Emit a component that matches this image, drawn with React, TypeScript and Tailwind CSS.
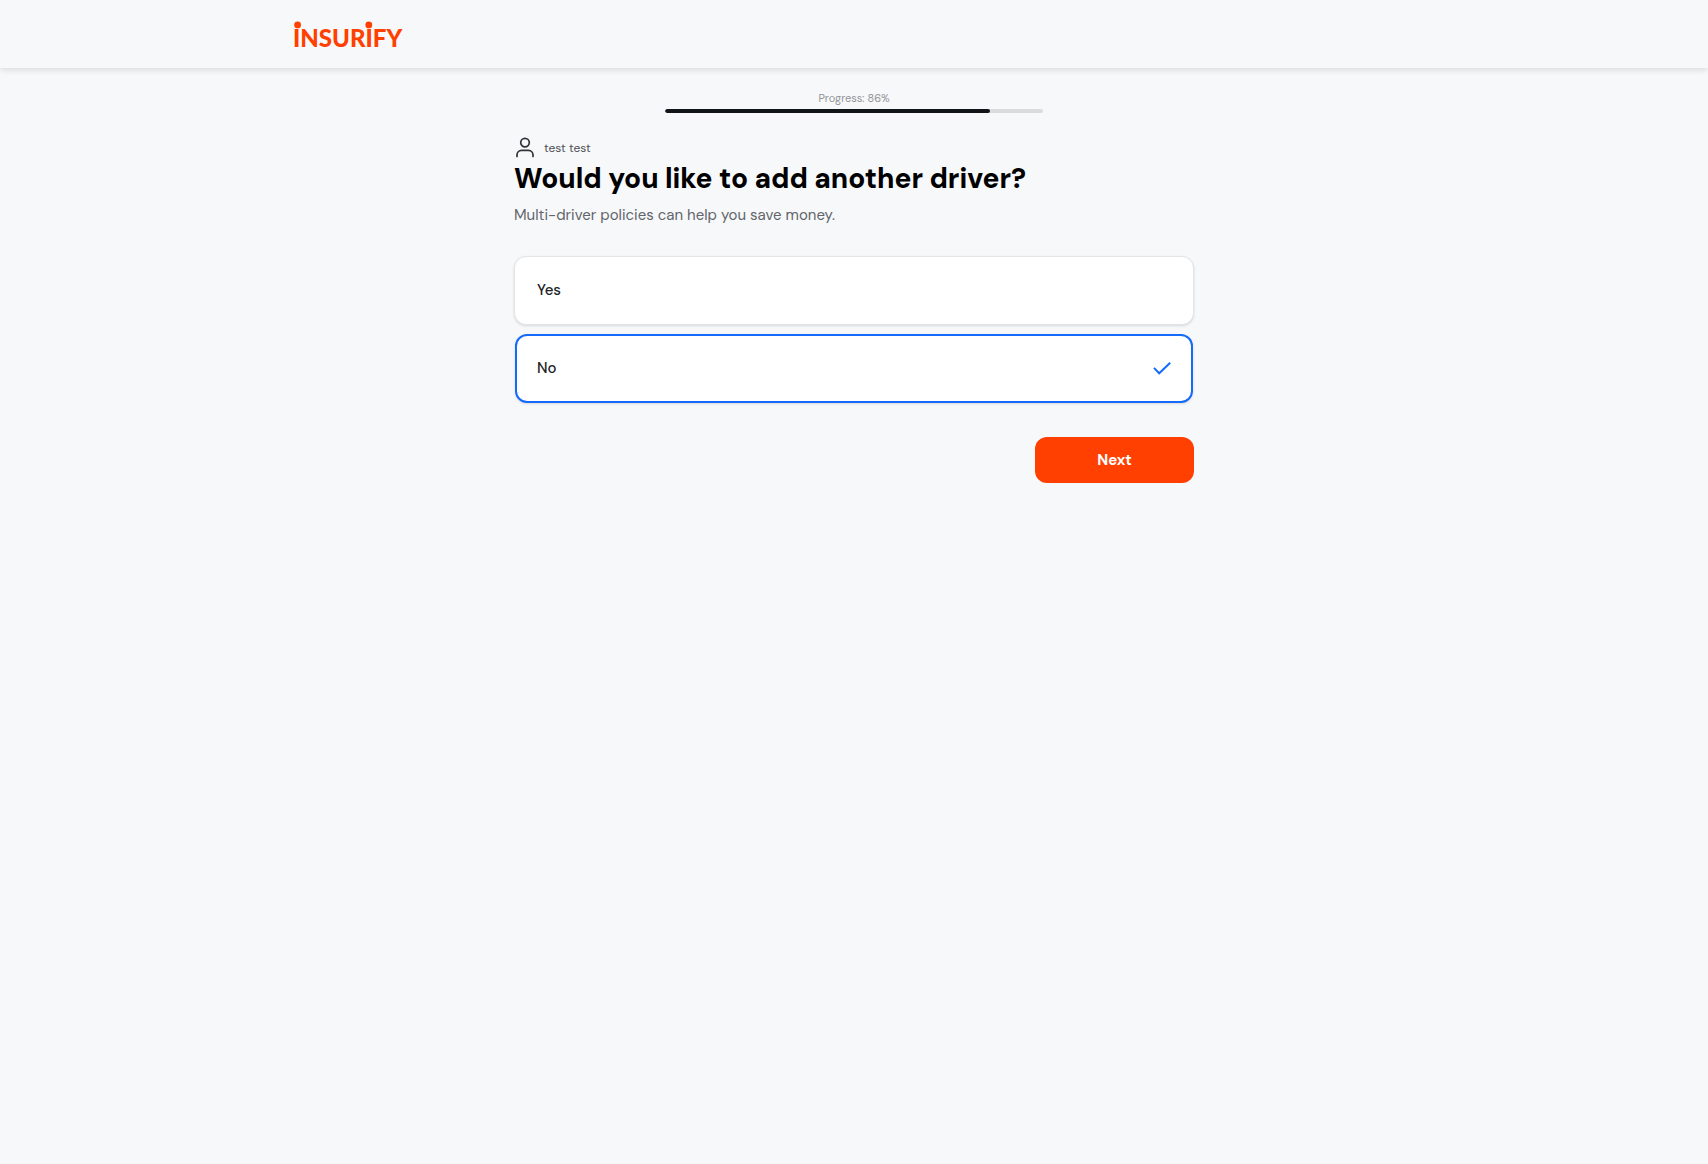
import { useState } from "react";

function Logo() {
  return (
    <svg viewBox="0 0 110 36" className="h-9 w-[110px] overflow-visible" role="img" aria-label="Insurify">
      <g fill="#ff4000">
        <circle cx="3.6" cy="4.9" r="3.4" />
        <circle cx="74.8" cy="4.9" r="3.4" />
        <text y="27" x="-1" fontFamily="Lato, sans-serif" fontWeight="900" fontSize="24">
          INSURIFY
        </text>
      </g>
    </svg>
  );
}

function UserIcon() {
  return (
    <svg viewBox="0 0 22 22" className="size-[22px]" fill="none" stroke="#303236" strokeWidth="1.7" strokeLinecap="round" aria-hidden="true">
      <circle cx="11" cy="5.6" r="4.3" />
      <path d="M3 19.4V18C3 15.4 4.9 13.4 7.5 13.4H14.5C17.1 13.4 19 15.4 19 18V19.4" />
    </svg>
  );
}

function CheckIcon() {
  return (
    <svg viewBox="0 0 18 14" className="h-3.5 w-[18px]" fill="none" stroke="#146bfb" strokeWidth="2" aria-hidden="true">
      <path d="M1 5.9L6.2 11.3L17.2 0.7" />
    </svg>
  );
}

const options = ["Yes", "No"];

export default function App() {
  const [selected, setSelected] = useState("No");
  const progress = 86;

  return (
    <div className="min-h-screen bg-[#f6f8fa] font-['DM_Sans',Inter,sans-serif] text-black">
      <header className="h-[68px] shadow-[0_2px_6px_rgba(0,0,0,0.12)]">
        <div className="mx-auto max-w-[1120px] pt-5">
          <a href="#" className="block w-[110px]">
            <Logo />
          </a>
        </div>
      </header>

      <main className="mx-auto max-w-[680px] pt-[22px]">
        <div className="mx-auto max-w-[378px]">
          <p id="progress-label" className="text-center text-[11px] leading-4 text-[#929498]">
            Progress: {progress}%
          </p>
          <div
            role="progressbar"
            aria-labelledby="progress-label"
            aria-valuenow={progress}
            className="mt-[3px] h-1 overflow-hidden rounded-full bg-[#dadbdd]"
          >
            <div className="h-full rounded-full bg-[#121517]" style={{ width: `${progress}%` }} />
          </div>
        </div>

        <div className="mt-6 flex h-[22px] items-center gap-2 text-[12px] text-[#4d4f53]">
          <UserIcon />
          <span>test test</span>
        </div>
        <h1 id="question" className="text-[28px] leading-10 font-extrabold">
          Would you like to add another driver?
        </h1>
        <p className="mt-1 text-[15px] leading-6 text-[#63656a]">Multi-driver policies can help you save money.</p>

        <fieldset aria-labelledby="question" className="mt-[29px] flex flex-col gap-[9px]">
          {options.map((option) => (
            <label
              key={option}
              className={
                selected === option
                  ? "mx-px flex h-[69px] cursor-pointer items-center justify-between rounded-xl border-2 border-[#146bfb] bg-white px-5 text-[15px] font-medium text-[#202225] shadow-sm"
                  : "flex h-[69px] cursor-pointer items-center justify-between rounded-xl border border-[#e3e4e7] bg-white px-[22px] text-[15px] font-medium text-[#202225] shadow-sm"
              }
            >
              <input
                type="radio"
                name="another-driver"
                value={option}
                checked={selected === option}
                onChange={() => setSelected(option)}
                className="sr-only"
              />
              <span>{option}</span>
              {selected === option && <CheckIcon />}
            </label>
          ))}
        </fieldset>

        <div className="mt-[34px] flex justify-end">
          <button type="button" className="h-[46px] w-[159px] rounded-xl bg-[#ff4000] text-[15px] font-bold text-white">
            Next
          </button>
        </div>
      </main>
    </div>
  );
}
